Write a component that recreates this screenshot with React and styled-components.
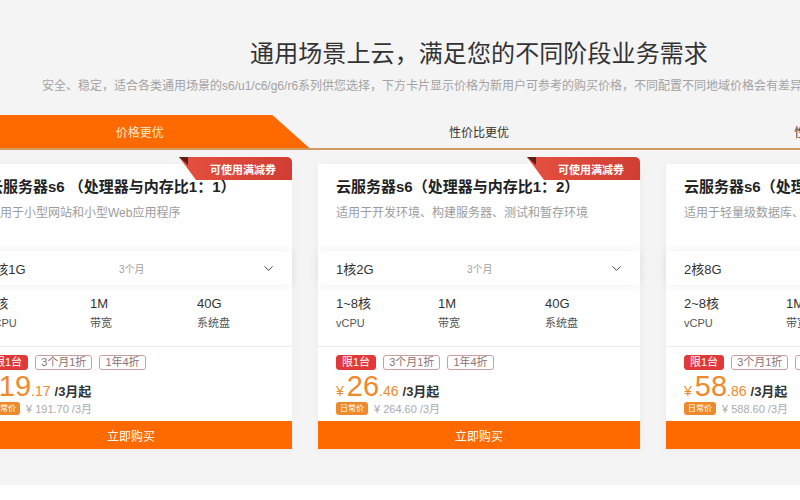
import React from "react";
import styled, { createGlobalStyle } from "styled-components";
import { ChevronDown } from "lucide-react";

const GlobalStyle = createGlobalStyle`
  html, body { margin: 0; padding: 0; background: #ffffff; }
  body {
    font-family: "Liberation Sans", "Noto Sans CJK SC", sans-serif;
    color: #333;
  }
  * { box-sizing: border-box; }
`;

const Page = styled.div`
  background: #f4f4f4;
  overflow: hidden;
  padding: 38px 0 36px;
`;

const Container = styled.div`
  width: 1018px;
  margin-left: -30px;
`;

const Title = styled.h1`
  margin: 0;
  font-size: 24px;
  line-height: 32px;
  font-weight: 400;
  color: #333;
  text-align: center;
  letter-spacing: 0.1px;
`;

const Subtitle = styled.p`
  margin: 7px 0 0;
  padding-left: 72px;
  font-size: 12px;
  line-height: 18px;
  color: #a3a3a3;
  white-space: nowrap;
`;

const Tabs = styled.div`
  margin-top: 20px;
  display: grid;
  grid-template-columns: repeat(3, 1fr);
  border-bottom: 2px solid #d09a62;
`;

const Tab = styled.div`
  height: 33px;
  display: flex;
  align-items: center;
  justify-content: center;
  font-size: 12px;
  color: ${(p) => (p.$active ? "#ffe9d6" : "#333")};
  background: ${(p) => (p.$active ? "#ff6a00" : "transparent")};
  clip-path: ${(p) =>
    p.$active ? "polygon(0 0, calc(100% - 37px) 0, 100% 100%, 0 100%)" : "none"};
`;

const Cards = styled.div`
  margin-top: 14px;
  display: flex;
  gap: 26px;
`;

const Card = styled.div`
  position: relative;
  width: 322px;
  height: 285px;
  background: #fff;
  box-shadow: 0 2px 8px rgba(0, 0, 0, 0.04);
  display: flex;
  flex-direction: column;
`;

const Ribbon = styled.div`
  position: absolute;
  top: -7px;
  right: 0;
  width: 113px;
  height: 23px;
`;

const RibbonFold = styled.div`
  position: absolute;
  left: 0;
  top: 0;
  width: 9px;
  height: 8px;
  background: #5a1f1a;
  clip-path: polygon(0 0, 100% 0, 100% 100%);
`;

const RibbonBody = styled.div`
  position: absolute;
  inset: 0;
  background: linear-gradient(90deg, #e4513f 0%, #d23d33 100%);
  border-top-right-radius: 5px;
  clip-path: polygon(0 0, 100% 0, 100% 100%, 17px 100%);
  display: flex;
  align-items: center;
  justify-content: flex-end;
  padding-right: 16px;
  color: #fff;
  font-size: 11px;
  font-weight: 700;
`;

const CardHead = styled.div`
  padding: 13px 18px 0;
`;

const CardTitle = styled.div`
  font-size: 15px;
  line-height: 20px;
  font-weight: 700;
  color: #222;
  white-space: nowrap;
`;

const CardDesc = styled.div`
  margin-top: 8px;
  font-size: 12px;
  line-height: 16px;
  color: #9c9c9c;
  white-space: nowrap;
`;

const SelectRow = styled.div`
  margin-top: 30px;
  height: 34px;
  display: flex;
  align-items: center;
  padding: 0 16px 0 18px;
  background: #fff;
  box-shadow: 0 0 10px rgba(0, 0, 0, 0.07);
`;

const SizeLabel = styled.span`
  width: 131px;
  font-size: 13px;
  color: #333;
`;

const Period = styled.span`
  flex: 1;
  font-size: 10px;
  color: #a0a0a0;
`;

const Specs = styled.div`
  display: grid;
  grid-template-columns: 102px 107px 1fr;
  padding: 10px 18px 16px;
  border-bottom: 1px solid #ececec;
`;

const SpecValue = styled.div`
  font-size: 13px;
  line-height: 18px;
  color: #333;
`;

const SpecLabel = styled.div`
  margin-top: 3px;
  font-size: 11px;
  line-height: 14px;
  color: #555;
`;

const PriceBox = styled.div`
  padding: 8px 18px 0;
`;

const TagRow = styled.div`
  display: flex;
  gap: 7px;
`;

const Tag = styled.span`
  height: 15px;
  padding: 0 5px;
  border-radius: 3px;
  font-size: 11px;
  line-height: 13px;
  border: 1px solid ${(p) => (p.$solid ? "#e2383a" : "#c6a0a0")};
  background: ${(p) => (p.$solid ? "#e2383a" : "#fff")};
  color: ${(p) => (p.$solid ? "#fff" : "#8d7171")};
`;

const PriceRow = styled.div`
  margin-top: 1px;
  display: flex;
  align-items: baseline;
  height: 30px;
  color: #ef8a2c;
`;

const Yen = styled.span`
  font-size: 14px;
  margin-right: 3px;
`;

const Big = styled.span`
  font-size: 29px;
  line-height: 30px;
`;

const Cents = styled.span`
  font-size: 14px;
  margin-right: 4px;
`;

const Unit = styled.span`
  font-size: 13px;
  font-weight: 700;
  color: #333;
`;

const DailyRow = styled.div`
  display: flex;
  align-items: center;
  gap: 6px;
  height: 14px;
`;

const DailyBadge = styled.span`
  height: 13px;
  padding: 0 4px;
  border-radius: 3px;
  background: #ef8a2c;
  color: #fff;
  font-size: 8px;
  line-height: 13px;
`;

const DailyPrice = styled.span`
  font-size: 11px;
  color: #aaa;
`;

const BuyButton = styled.button`
  margin-top: auto;
  height: 28px;
  width: 100%;
  border: none;
  background: #ff6a00;
  color: #fff;
  font-family: inherit;
  font-size: 12px;
  cursor: pointer;
`;

const cards = [
  {
    title: "云服务器s6 （处理器与内存比1：1）",
    desc: "适用于小型网站和小型Web应用程序",
    size: "1核1G",
    cpu: "1核",
    price: "19",
    cents: ".17",
    daily: "¥ 191.70 /3月",
  },
  {
    title: "云服务器s6（处理器与内存比1：2）",
    desc: "适用于开发环境、构建服务器、测试和暂存环境",
    size: "1核2G",
    cpu: "1~8核",
    price: "26",
    cents: ".46",
    daily: "¥ 264.60 /3月",
  },
  {
    title: "云服务器s6（处理器与内存比1：4）",
    desc: "适用于轻量级数据库、缓存和中小型企业应用",
    size: "2核8G",
    cpu: "2~8核",
    price: "58",
    cents: ".86",
    daily: "¥ 588.60 /3月",
  },
];

export default function App() {
  return (
    <>
      <GlobalStyle />
      <Page>
        <Container>
          <Title>通用场景上云，满足您的不同阶段业务需求</Title>
          <Subtitle>
            安全、稳定，适合各类通用场景的s6/u1/c6/g6/r6系列供您选择，下方卡片显示价格为新用户可参考的购买价格，不同配置不同地域价格会有差异
          </Subtitle>
          <Tabs>
            <Tab $active>价格更优</Tab>
            <Tab>性价比更优</Tab>
            <Tab>性能更优</Tab>
          </Tabs>
          <Cards>
            {cards.map((c) => (
              <Card key={c.size}>
                <Ribbon>
                  <RibbonBody>可使用满减券</RibbonBody>
                  <RibbonFold />
                </Ribbon>
                <CardHead>
                  <CardTitle>{c.title}</CardTitle>
                  <CardDesc>{c.desc}</CardDesc>
                </CardHead>
                <SelectRow>
                  <SizeLabel>{c.size}</SizeLabel>
                  <Period>3个月</Period>
                  <ChevronDown size={15} strokeWidth={1.6} color="#444" />
                </SelectRow>
                <Specs>
                  <div>
                    <SpecValue>{c.cpu}</SpecValue>
                    <SpecLabel>vCPU</SpecLabel>
                  </div>
                  <div>
                    <SpecValue>1M</SpecValue>
                    <SpecLabel>带宽</SpecLabel>
                  </div>
                  <div>
                    <SpecValue>40G</SpecValue>
                    <SpecLabel>系统盘</SpecLabel>
                  </div>
                </Specs>
                <PriceBox>
                  <TagRow>
                    <Tag $solid>限1台</Tag>
                    <Tag>3个月1折</Tag>
                    <Tag>1年4折</Tag>
                  </TagRow>
                  <PriceRow>
                    <Yen>¥</Yen>
                    <Big>{c.price}</Big>
                    <Cents>{c.cents}</Cents>
                    <Unit>/3月起</Unit>
                  </PriceRow>
                  <DailyRow>
                    <DailyBadge>日常价</DailyBadge>
                    <DailyPrice>{c.daily}</DailyPrice>
                  </DailyRow>
                </PriceBox>
                <BuyButton>立即购买</BuyButton>
              </Card>
            ))}
          </Cards>
        </Container>
      </Page>
    </>
  );
}
